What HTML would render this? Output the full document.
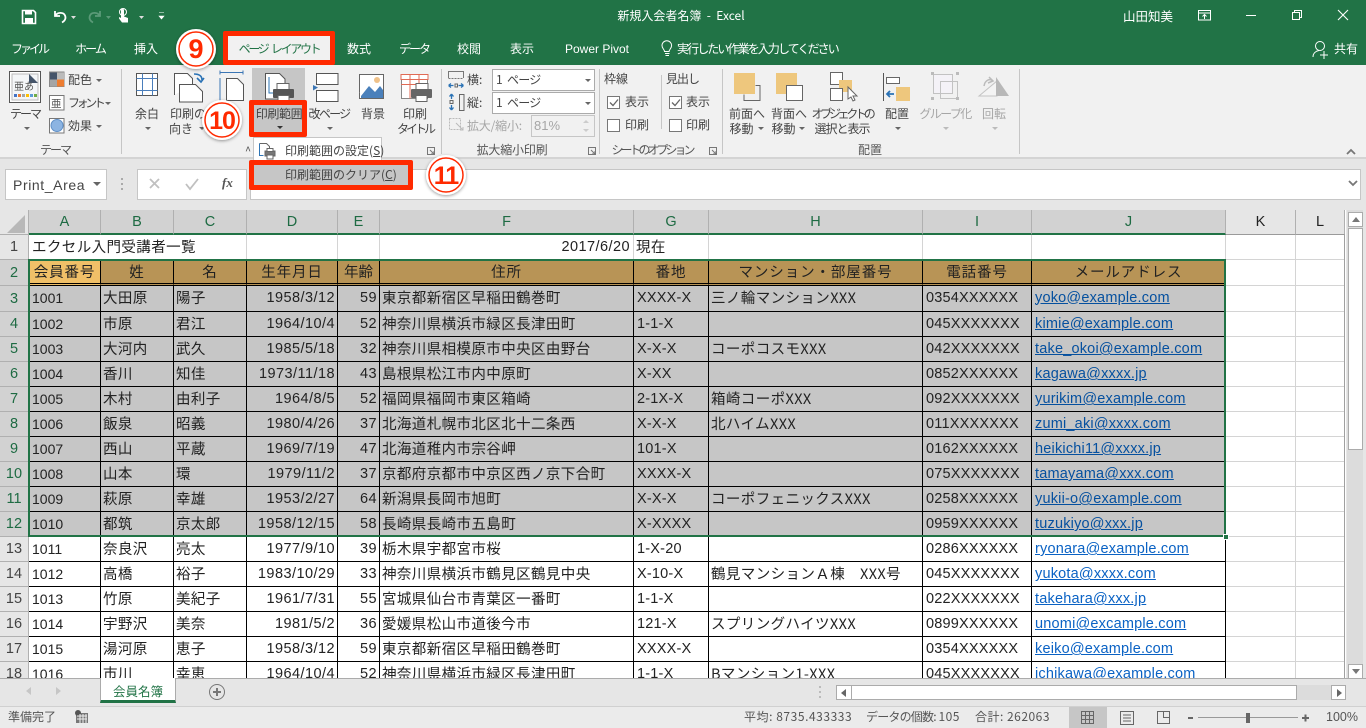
<!DOCTYPE html>
<html lang="ja"><head><meta charset="utf-8"><title>新規入会者名簿 - Excel</title>
<style>
*{box-sizing:border-box}
html,body{margin:0;padding:0;width:1366px;height:728px;overflow:hidden;background:#e6e6e6;font-family:"Liberation Sans","Noto Sans CJK JP",sans-serif;color:#333}
.a{position:absolute;white-space:nowrap}
.t{position:absolute;white-space:nowrap;font-size:12px;line-height:16px;color:#444;font-family:"Noto Sans CJK JP","Liberation Sans",sans-serif;transform:translateX(-50%);text-align:center}
.t2{line-height:15px}
.w{color:#fff}
.g{color:#a6a6a6}
.l{transform:none}
svg{position:absolute;overflow:visible}
.sep{position:absolute;top:69px;height:85px;width:1px;background:#c6c6c6}
.dd{position:absolute;width:0;height:0;border:3px solid transparent;border-top:3px solid #666;border-bottom:0}
.box{position:absolute;background:#fff;border:1px solid #ababab}
.cb{position:absolute;width:13px;height:13px;background:#fff;border:1px solid #777}
.red{position:absolute;border:5px solid #ff2a00;border-radius:2px}
#grid{position:absolute;left:0;top:210px;width:1346px;height:468px;overflow:hidden;background:#fff}
table{border-collapse:separate;border-spacing:0;table-layout:fixed;width:1345px;font-size:14.5px;color:#222;font-family:"Liberation Sans","Noto Sans CJK JP",sans-serif}
td,th{padding:0 3px;height:25px;overflow:hidden;white-space:nowrap;font-weight:400;border-right:1px solid #000;border-bottom:1px solid #000;line-height:22px}
td{letter-spacing:.2px}
td:nth-child(2){letter-spacing:0;font-size:14px}
th{background:#e6e6e6;color:#444;border-right:1px solid #b0b0b0;border-bottom:1px solid #b0b0b0;text-align:center;padding:0;font-size:14.5px}
tr.h th{height:25px;color:#1e6b43;background:#d2d2d2;border-bottom:2px solid #217346;font-size:14.5px}
tr.h th.n{background:#e6e6e6;color:#222;border-bottom:1px solid #9a9a9a;border-right:1px solid #b0b0b0}
tr.h th.z{background:#e6e6e6;border-bottom:1px solid #b0b0b0;border-right:1px solid #b0b0b0}
th.s{background:#d2d2d2;color:#1e6b43}
td.e{border-right:1px solid #d4d4d4;border-bottom:1px solid #d4d4d4;background:#fff}
tr.r1 td{border-right:1px solid #d4d4d4;border-bottom:1px solid #d4d4d4;background:#fff}
tr.r2 td{background:#b89456;text-align:center;height:26px;border-bottom:3px double #000;font-size:14.5px;letter-spacing:.9px;color:#222;font-family:"Noto Sans CJK JP",sans-serif}
tr.r2 td.e{background:#fff;border-bottom:1px solid #d4d4d4;border-right:1px solid #d4d4d4}
tr.sel td{background:#c6c6c6}
tr.sel td.e{background:#fff}
tr.f td{padding-bottom:2px}
td.rt{text-align:right;padding-right:2px;letter-spacing:.45px}
td.j,td.j:nth-child(2){font-size:14.5px;letter-spacing:.4px;font-family:"Noto Sans CJK JP","Liberation Sans",sans-serif;padding-left:2px}
a{color:#0a62c4;text-decoration:underline}
tr.sel a{color:#05509f}
</style></head><body>

<!-- title bar + tabs -->
<div class="a" style="left:0;top:0;width:1366px;height:65px;background:#217346"></div>
<svg style="left:0;top:0" width="180" height="32" viewBox="0 0 180 32" fill="none">
<path d="M22.500 10.500h11l2 2v11h-13z" stroke="#fff" stroke-width="1.600"/><rect x="25" y="10" width="7" height="4.500" fill="#fff"/><rect x="25" y="18" width="8" height="5.500" fill="#fff"/>
<path d="M55 11v5h5M55.500 15.500c2-3.500 8-3.500 9.500 0s-1 6-3 7" stroke="#fff" stroke-width="1.800"/><path d="M71 16h5l-2.500 3z" fill="#ddd"/>
<path d="M100 11v5h-5M99.500 15.500c-2-3.500-8-3.500-9.500 0s1 6 3 7" stroke="#5b9a78" stroke-width="1.800"/><path d="M106 16h5l-2.500 3z" fill="#5b9a78"/>
<path d="M121 9.500a2.500 2.500 0 0 1 3 0v7l4 1.500v4.500h-6l-3-4v-1.500l2 1z" fill="#fff"/><circle cx="123" cy="12" r="3.500" stroke="#fff"/>
<path d="M139 16h5l-2.500 3z" fill="#ddd"/><path d="M159 12.500h5M159 16h5l-2.500 3z" fill="#fff" stroke="#fff" stroke-width=".6"/>
</svg>
<div class="t w" style="left:681px;top:8px;font-size:12px">新規入会者名簿&nbsp; -&nbsp; Excel</div>
<div class="t w" style="left:1148px;top:8px;font-size:12.500px">山田知美</div>
<svg style="left:1190px;top:0" width="176" height="32" fill="none" stroke="#fff"><rect x="8.500" y="10.500" width="12" height="9.500"/><path d="M8 13h13M14.500 19v-4M12.500 16.500l2-2 2 2"/><path d="M56 15.500h10"/><rect x="102.500" y="12.500" width="7" height="7"/><path d="M104.500 12.500v-2h7v7h-2"/><path d="M148 10l10 10M158 10l-10 10" stroke-width="1.100"/></svg>

<div class="t w" style="left:29px;top:41px;letter-spacing:-3px">ファイル</div>
<div class="t w" style="left:90px;top:41px;letter-spacing:-2px">ホーム</div>
<div class="t w" style="left:146px;top:41px">挿入</div>
<div class="t w" style="left:359px;top:41px">数式</div>
<div class="t w" style="left:414px;top:41px;letter-spacing:-2px">データ</div>
<div class="t w" style="left:469px;top:41px">校閲</div>
<div class="t w" style="left:522px;top:41px">表示</div>
<div class="t w" style="left:597px;top:41px;font-family:'Liberation Sans',sans-serif">Power Pivot</div>
<svg style="left:660px;top:40px" width="14" height="18" fill="none" stroke="#fff"><path d="M4.500 11.500c0-2-2.500-3-2.500-6a4.800 4.800 0 0 1 9.600 0c0 3-2.500 4-2.500 6zM5 13.500h4.500M5.500 15.500h3.500"/></svg>
<div class="t w l" style="left:677px;top:41px;letter-spacing:-1.900px">実行したい作業を入力してください</div>
<svg style="left:1310px;top:40px" width="20" height="18" fill="none" stroke="#fff"><circle cx="10" cy="6" r="4.500"/><path d="M3 17c0-4 3-6 6-6.500M10 15h8M14 11v8"/></svg>
<div class="t w" style="left:1346px;top:41px">共有</div>

<!-- ribbon -->
<div class="a" style="left:0;top:65px;width:1366px;height:94px;background:#f1f1f1;border-bottom:2px solid #d4d4d4"></div>
<div class="sep" style="left:121px"></div><div class="sep" style="left:441px"></div><div class="sep" style="left:599px"></div><div class="sep" style="left:722px"></div><div class="sep" style="left:1019px"></div>
<div class="a" style="left:252px;top:68px;width:53px;height:69px;background:#c6c6c6"></div>

<!-- theme -->
<svg style="left:9px;top:71px" width="115" height="66" fill="none">
<rect x=".500" y=".500" width="31" height="31" fill="#fff" stroke="#555"/><rect x="3" y="3" width="26" height="26" fill="#f4f6f8" stroke="#bbb"/><path d="M20 3l9 9h-9z" fill="#44546a"/>
<rect x="5" y="23" width="3" height="3" fill="#4472c4"/><rect x="9" y="23" width="3" height="3" fill="#ed7d31"/><rect x="13" y="23" width="3" height="3" fill="#a5a5a5"/><rect x="17" y="23" width="3" height="3" fill="#ffc000"/><rect x="21" y="23" width="3" height="3" fill="#5b9bd5"/><rect x="25" y="23" width="3" height="3" fill="#70ad47"/>
<text x="5" y="19" font-size="10" fill="#555" font-family="Noto Sans CJK JP,sans-serif" stroke="none">亜あ</text>
<rect x="40.500" y="1" width="14.500" height="14.500" fill="#fff" stroke="#888"/><rect x="41" y="1.500" width="7" height="7" fill="#44546a"/><rect x="48" y="1.500" width="7" height="7" fill="#bbb"/><rect x="41" y="8.500" width="7" height="7" fill="#a5a5a5"/><rect x="48" y="8.500" width="7" height="7" fill="#ed7d31"/>
<rect x="40.500" y="24.500" width="14.500" height="14.500" fill="#fff" stroke="#777"/><text x="42" y="36" font-size="10.500" fill="#555" font-family="Noto Sans CJK JP,sans-serif" stroke="none">亜</text>
<rect x="40.500" y="47.500" width="14.500" height="14.500" fill="#fff" stroke="#777"/><circle cx="48" cy="54.500" r="6" fill="#8cb4e2" stroke="#5f8fc7"/>
</svg>
<div class="t l" style="left:68px;top:72px">配色</div><div class="dd" style="left:96px;top:79px"></div>
<div class="t l" style="left:68px;top:95px;letter-spacing:-3.400px">フォント</div><div class="dd" style="left:105px;top:102px"></div>
<div class="t l" style="left:68px;top:118px">効果</div><div class="dd" style="left:96px;top:125px"></div>
<div class="t" style="left:25px;top:106px;letter-spacing:-2px">テーマ</div><div class="dd" style="left:24px;top:127px"></div>
<div class="t" style="left:55px;top:142px;color:#555;letter-spacing:-2px">テーマ</div>

<!-- page setup icons -->
<svg style="left:130px;top:70px" width="310" height="65" fill="none">
<rect x="6.500" y="3.500" width="21" height="22" fill="#fff" stroke="#555"/><path d="M6.500 8.500h21M6.500 20.500h21M12.500 3.500v22M22.500 3.500v22" stroke="#4a7ebb"/>
<path d="M44.500 25V3.500h13l5 5v6" fill="#fff" stroke="#555"/><path d="M49.500 14.500h16l7 7v10.500h-23z" fill="#fff" stroke="#555"/><path d="M64 4c5 0 8 2 8 6M67 8l4 4 3-4" stroke="#2a72b5" stroke-width="1.600"/>
<path d="M90 2.500h23M90 .5v4M113 .5v4" stroke="#3b76b5"/><path d="M96.500 8.500h11l6 6v16h-17z" fill="#fff" stroke="#555"/><path d="M90 8v23" stroke="#3b76b5"/>
<path d="M135.500 3.500h14l5.500 5.500v20h-19.500z" fill="#fff" stroke="#555"/><path d="M139 7v16h4" stroke="#2e75b6"/><rect x="147" y="13.500" width="12" height="8" fill="#fff" stroke="#666"/><rect x="143" y="19" width="21" height="9" fill="#555" rx="1"/><rect x="148" y="25.500" width="11" height="6" fill="#fff" stroke="#666"/>
<path d="M186.500 3.500h21.500v11h-21.500zM186.500 20.500h21.500v11h-21.500z" fill="#fff" stroke="#555"/><path d="M183 15l5 2.500-5 3z" fill="#3b76b5"/>
<rect x="229.500" y="4.500" width="24" height="24" fill="#fff" stroke="#666"/><path d="M231 26l8-10 6 6 5-6 3 4v8h-22z" fill="#4a80bb"/><circle cx="247" cy="10" r="3" fill="#f0c28a"/><path d="M230 23l11-11" stroke="#fff"/>
<rect x="271.500" y="4.500" width="26" height="24" fill="#fff" stroke="#888"/><path d="M271 4.500h27v5h-27z" fill="#fff" stroke="#e06b55"/><path d="M271 14.500h27M280 4.500v24M289 4.500v24" stroke="#e06b55"/><rect x="286" y="13.500" width="12" height="8" fill="#fff" stroke="#666"/><rect x="281" y="19" width="21" height="9" fill="#666" rx="1"/><rect x="286" y="25.500" width="11" height="6" fill="#fff" stroke="#666"/>
</svg>
<div class="t" style="left:147px;top:106px">余白</div><div class="dd" style="left:145px;top:127px"></div>
<div class="t t2" style="left:188px;top:106px">印刷の<br><span style="display:inline-block;margin-right:14px">向き</span></div><div class="dd" style="left:199px;top:127px"></div>
<div class="t" style="left:279px;top:106px;letter-spacing:-.4px">印刷範囲</div><div class="dd" style="left:277px;top:126px;border-top-color:#333"></div>
<div class="t" style="left:329px;top:106px;letter-spacing:-1.700px">改ページ</div><div class="dd" style="left:327px;top:127px"></div>
<div class="t" style="left:373px;top:106px">背景</div>
<div class="t t2" style="left:415px;top:106px">印刷<br><span style="letter-spacing:-3px">タイトル</span></div>
<div class="t" style="left:248px;top:143px;color:#555;font-size:11px">^</div>
<svg style="left:427px;top:147px" width="10" height="10" fill="none" stroke="#777"><path d="M.5 .5h7v7h-7zM3 3l4 4M7 4v3H4"/></svg>

<!-- scale -->
<svg style="left:447px;top:70px" width="18" height="66" fill="none"><path d="M1.500 8V1.500h15V8" stroke="#777"/><path d="M1.500 8.500h15" stroke="#777" stroke-dasharray="2 1"/><path d="M1.500 15.500h5M1.500 15.500l2.500-2M1.500 15.500l2.500 2M16.500 15.500h-5M16.500 15.500l-2.500-2M16.500 15.500l-2.500 2" stroke="#2a72b5" stroke-width="1.300"/><rect x="8" y="14" width="2.500" height="3" stroke="#666"/><path d="M4.500 24v5M4.500 24l-2 2.500M4.500 24l2 2.500M4.500 40v-5M4.500 40l-2-2.500M4.500 40l2-2.500" stroke="#2a72b5" stroke-width="1.300"/><rect x="3" y="30.500" width="3" height="3" stroke="#666"/><rect x="12.500" y="24.500" width="4.500" height="16" stroke="#666"/><rect x="2.500" y="48.500" width="11" height="11" stroke="#bbb" stroke-dasharray="2 1"/><path d="M9 53l7 7M13 60h3v-3" stroke="#bbb"/></svg>
<div class="t l" style="left:467px;top:72px">横:</div><div class="t l" style="left:467px;top:95px">縦:</div><div class="t l g" style="left:467px;top:118px;letter-spacing:-.2px">拡大/縮小:</div>
<div class="box" style="left:492px;top:69px;width:103px;height:22px"></div><div class="box" style="left:492px;top:92px;width:103px;height:22px"></div><div class="box" style="left:531px;top:115px;width:64px;height:22px;background:#f1f1f1;border-color:#c6c6c6"></div>
<div class="t l" style="left:496px;top:72px;letter-spacing:-.7px;word-spacing:3px">1 ページ</div><div class="t l" style="left:496px;top:95px;letter-spacing:-.7px;word-spacing:3px">1 ページ</div><div class="t l g" style="left:534px;top:118px;font-family:'Liberation Sans',sans-serif;font-size:13px">81%</div>
<div class="dd" style="left:585px;top:79px"></div><div class="dd" style="left:585px;top:102px"></div>
<div class="a" style="left:583px;top:120px;border:3px solid transparent;border-bottom:3px solid #ccc;border-top:0"></div><div class="a" style="left:583px;top:129px;border:3px solid transparent;border-top:3px solid #ccc;border-bottom:0"></div>
<div class="t" style="left:512px;top:142px;color:#555;letter-spacing:-.2px">拡大縮小印刷</div>
<svg style="left:588px;top:147px" width="10" height="10" fill="none" stroke="#777"><path d="M.5 .5h7v7h-7zM3 3l4 4M7 4v3H4"/></svg>

<!-- sheet options -->
<div class="t l" style="left:604px;top:71px">枠線</div><div class="t l" style="left:666px;top:71px;letter-spacing:-1px">見出し</div>
<div class="a" style="left:661px;top:75px;width:1px;height:54px;background:#c6c6c6"></div>
<div class="cb" style="left:607px;top:96px"></div><div class="cb" style="left:669px;top:96px"></div><div class="cb" style="left:607px;top:119px"></div><div class="cb" style="left:669px;top:119px"></div>
<svg style="left:607px;top:96px" width="80" height="14" fill="none" stroke="#666" stroke-width="1.300"><path d="M3 6.500l3 3 5-6M65 6.500l3 3 5-6"/></svg>
<div class="t l" style="left:625px;top:94px">表示</div><div class="t l" style="left:686px;top:94px">表示</div><div class="t l" style="left:625px;top:117px">印刷</div><div class="t l" style="left:686px;top:117px">印刷</div>
<div class="t" style="left:652px;top:142px;color:#555;letter-spacing:-3px">シートのオプション</div>
<svg style="left:709px;top:147px" width="10" height="10" fill="none" stroke="#777"><path d="M.5 .5h7v7h-7zM3 3l4 4M7 4v3H4"/></svg>

<!-- arrange -->
<svg style="left:730px;top:70px" width="300" height="66" fill="none">
<rect x="4" y="3" width="21" height="21" fill="#eec77d"/><path d="M25.500 15.500h4.500v15h-16v-6" stroke="#666"/>
<rect x="46" y="3" width="21" height="21" fill="#eec77d"/><rect x="56.500" y="15.500" width="16" height="15" fill="#fff" stroke="#666"/>
<rect x="100.500" y="2.500" width="12" height="12" stroke="#666" fill="#fff"/><rect x="109" y="10" width="13" height="12" fill="#eec77d"/><rect x="100.500" y="18.500" width="12" height="12" stroke="#666" fill="#fff"/><path d="M118 17v12l3-2 2 4 2-1-2-4h4z" fill="#fff" stroke="#666"/>
<path d="M153.500 3v28" stroke="#555"/><rect x="156.500" y="7.500" width="13" height="6" stroke="#666" fill="#fff"/><rect x="166" y="17" width="14" height="14" fill="#eec77d"/><path d="M164 24h-7M160 21l-3 3 3 3" stroke="#2a72b5" stroke-width="1.800"/>
<rect x="203.500" y="4.500" width="19" height="19" stroke="#c2c2c2" fill="#f4f2f7"/><rect x="210.500" y="11.500" width="17" height="17" stroke="#c2c2c2"/><path d="M201 2h3v3h-3zM226 2h3v3h-3zM201 27h3v3h-3zM226 27h3v3h-3z" fill="#bbb"/>
<path d="M249 26l18-15v15z" stroke="#c4c4c4" fill="#f4f4f4"/><path d="M266 26V7l13 19z" fill="#b8b8b8"/><path d="M254 16c1-6 6-8 9-5M259 7l4 4-5 2" stroke="#bbb" stroke-width="1.500"/>
</svg>
<div class="t t2" style="left:747px;top:106px">前面へ<br><span style="display:inline-block;margin-right:11px">移動</span></div><div class="dd" style="left:758px;top:127px"></div>
<div class="t t2" style="left:789px;top:106px">背面へ<br><span style="display:inline-block;margin-right:11px">移動</span></div><div class="dd" style="left:799px;top:127px"></div>
<div class="t t2" style="left:842px;top:106px"><span style="letter-spacing:-3.300px">オブジェクトの</span><br><span style="letter-spacing:-1px">選択と表示</span></div>
<div class="t" style="left:897px;top:106px">配置</div><div class="dd" style="left:895px;top:127px"></div>
<div class="t g" style="left:945px;top:106px;letter-spacing:-1.600px">グループ化</div><div class="dd" style="left:943px;top:127px;border-top-color:#bbb"></div>
<div class="t g" style="left:994px;top:106px">回転</div><div class="dd" style="left:992px;top:127px;border-top-color:#bbb"></div>
<div class="t" style="left:870px;top:142px;color:#555">配置</div>
<svg style="left:1345px;top:147px" width="16" height="10" fill="none" stroke="#777" stroke-width="1.800"><path d="M2 7l4-4 4 4"/></svg>

<!-- formula -->
<div class="box" style="left:5px;top:169px;width:102px;height:31px;border-color:#c6c6c6"></div>
<div class="a" style="left:13px;top:177px;font-size:14px;color:#444;letter-spacing:.6px">Print_Area</div>
<div class="dd" style="left:93px;top:182px;border-width:4px;border-bottom:0"></div>
<div class="a" style="left:121px;top:178px;width:2px;height:2px;background:#aaa;box-shadow:0 5px #aaa,0 10px #aaa"></div>
<div class="box" style="left:137px;top:169px;width:110px;height:31px;border-color:#c6c6c6"></div>
<svg style="left:148px;top:176px" width="90" height="16" fill="none" stroke="#c0c0c0" stroke-width="1.800"><path d="M2 3l9 9M11 3l-9 9M38 8l4 5 8-10"/></svg>
<div class="a" style="left:222px;top:175px;font:italic bold 13px 'Liberation Serif',serif;color:#555">fx</div>
<div class="box" style="left:250px;top:169px;width:1111px;height:31px;border-color:#c6c6c6"></div>
<svg style="left:1348px;top:179px" width="12" height="10" fill="none" stroke="#777" stroke-width="1.800"><path d="M1 2l4 4 4-4"/></svg>

<!-- grid -->
<div id="grid">
<table>
<colgroup><col style="width:29px"><col style="width:72px"><col style="width:73px"><col style="width:73px"><col style="width:91px"><col style="width:42px"><col style="width:254px"><col style="width:75px"><col style="width:214px"><col style="width:109px"><col style="width:194px"><col style="width:70px"><col style="width:49px"></colgroup>
<tr class="h"><th class="z"></th><th>A</th><th>B</th><th>C</th><th>D</th><th>E</th><th>F</th><th>G</th><th>H</th><th>I</th><th>J</th><th class="n">K</th><th class="n">L</th></tr>
<tr class="r1"><th>1</th><td class="j" colspan="3" style="padding-left:3px">エクセル入門受講者一覧</td><td></td><td></td><td class="rt" style="padding-right:3px">2017/6/20</td><td class="j">現在</td><td></td><td></td><td></td><td></td><td></td></tr>
<tr class="r2"><th class="s" style="height:26px">2</th><td style="background:#f0c068">会員番号</td><td>姓</td><td>名</td><td>生年月日</td><td style="letter-spacing:0">年齢</td><td>住所</td><td>番地</td><td>マンション・部屋番号</td><td>電話番号</td><td>メールアドレス</td><td class="e"></td><td class="e"></td></tr>
<tr class="sel f"><th class="s" style="height:26px">3</th><td>1001</td><td class="j">大田原</td><td class="j">陽子</td><td class="rt">1958/3/12</td><td class="rt">59</td><td class="j">東京都新宿区早稲田鶴巻町</td><td>XXXX-X</td><td class="j">三ノ輪マンションXXX</td><td>0354XXXXXX</td><td><a>yoko@example.com</a></td><td class="e"></td><td class="e"></td></tr>
<tr class="sel"><th class="s">4</th><td>1002</td><td class="j">市原</td><td class="j">君江</td><td class="rt">1964/10/4</td><td class="rt">52</td><td class="j">神奈川県横浜市緑区長津田町</td><td>1-1-X</td><td></td><td>045XXXXXXX</td><td><a>kimie@example.com</a></td><td class="e"></td><td class="e"></td></tr>
<tr class="sel"><th class="s">5</th><td>1003</td><td class="j">大河内</td><td class="j">武久</td><td class="rt">1985/5/18</td><td class="rt">32</td><td class="j">神奈川県相模原市中央区由野台</td><td>X-X-X</td><td class="j">コーポコスモXXX</td><td>042XXXXXXX</td><td><a>take_okoi@example.com</a></td><td class="e"></td><td class="e"></td></tr>
<tr class="sel"><th class="s">6</th><td>1004</td><td class="j">香川</td><td class="j">知佳</td><td class="rt">1973/11/18</td><td class="rt">43</td><td class="j">島根県松江市内中原町</td><td>X-XX</td><td></td><td>0852XXXXXX</td><td><a>kagawa@xxxx.jp</a></td><td class="e"></td><td class="e"></td></tr>
<tr class="sel"><th class="s">7</th><td>1005</td><td class="j">木村</td><td class="j">由利子</td><td class="rt">1964/8/5</td><td class="rt">52</td><td class="j">福岡県福岡市東区箱崎</td><td>2-1X-X</td><td class="j">箱崎コーポXXX</td><td>092XXXXXXX</td><td><a>yurikim@example.com</a></td><td class="e"></td><td class="e"></td></tr>
<tr class="sel"><th class="s">8</th><td>1006</td><td class="j">飯泉</td><td class="j">昭義</td><td class="rt">1980/4/26</td><td class="rt">37</td><td class="j">北海道札幌市北区北十二条西</td><td>X-X-X</td><td class="j">北ハイムXXX</td><td>011XXXXXXX</td><td><a>zumi_aki@xxxx.com</a></td><td class="e"></td><td class="e"></td></tr>
<tr class="sel"><th class="s">9</th><td>1007</td><td class="j">西山</td><td class="j">平蔵</td><td class="rt">1969/7/19</td><td class="rt">47</td><td class="j">北海道稚内市宗谷岬</td><td>101-X</td><td></td><td>0162XXXXXX</td><td><a>heikichi11@xxxx.jp</a></td><td class="e"></td><td class="e"></td></tr>
<tr class="sel"><th class="s">10</th><td>1008</td><td class="j">山本</td><td class="j">環</td><td class="rt">1979/11/2</td><td class="rt">37</td><td class="j">京都府京都市中京区西ノ京下合町</td><td>XXXX-X</td><td></td><td>075XXXXXXX</td><td><a>tamayama@xxx.com</a></td><td class="e"></td><td class="e"></td></tr>
<tr class="sel"><th class="s">11</th><td>1009</td><td class="j">萩原</td><td class="j">幸雄</td><td class="rt">1953/2/27</td><td class="rt">64</td><td class="j">新潟県長岡市旭町</td><td>X-X-X</td><td class="j">コーポフェニックスXXX</td><td>0258XXXXXX</td><td><a>yukii-o@example.com</a></td><td class="e"></td><td class="e"></td></tr>
<tr class="sel"><th class="s">12</th><td>1010</td><td class="j">都筑</td><td class="j">京太郎</td><td class="rt">1958/12/15</td><td class="rt">58</td><td class="j">長崎県長崎市五島町</td><td>X-XXXX</td><td></td><td>0959XXXXXX</td><td><a>tuzukiyo@xxx.jp</a></td><td class="e"></td><td class="e"></td></tr>
<tr><th>13</th><td>1011</td><td class="j">奈良沢</td><td class="j">亮太</td><td class="rt">1977/9/10</td><td class="rt">39</td><td class="j">栃木県宇都宮市桜</td><td>1-X-20</td><td></td><td>0286XXXXXX</td><td><a>ryonara@example.com</a></td><td class="e"></td><td class="e"></td></tr>
<tr><th>14</th><td>1012</td><td class="j">高橋</td><td class="j">裕子</td><td class="rt">1983/10/29</td><td class="rt">33</td><td class="j">神奈川県横浜市鶴見区鶴見中央</td><td>X-10-X</td><td class="j">鶴見マンションＡ棟　XXX号</td><td>045XXXXXXX</td><td><a>yukota@xxxx.com</a></td><td class="e"></td><td class="e"></td></tr>
<tr><th>15</th><td>1013</td><td class="j">竹原</td><td class="j">美紀子</td><td class="rt">1961/7/31</td><td class="rt">55</td><td class="j">宮城県仙台市青葉区一番町</td><td>1-1-X</td><td></td><td>022XXXXXXX</td><td><a>takehara@xxx.jp</a></td><td class="e"></td><td class="e"></td></tr>
<tr><th>16</th><td>1014</td><td class="j">宇野沢</td><td class="j">美奈</td><td class="rt">1981/5/2</td><td class="rt">36</td><td class="j">愛媛県松山市道後今市</td><td>121-X</td><td class="j">スプリングハイツXXX</td><td>0899XXXXXX</td><td><a>unomi@excample.com</a></td><td class="e"></td><td class="e"></td></tr>
<tr><th>17</th><td>1015</td><td class="j">湯河原</td><td class="j">恵子</td><td class="rt">1958/3/12</td><td class="rt">59</td><td class="j">東京都新宿区早稲田鶴巻町</td><td>XXXX-X</td><td></td><td>0354XXXXXX</td><td><a>keiko@example.com</a></td><td class="e"></td><td class="e"></td></tr>
<tr><th>18</th><td>1016</td><td class="j">市川</td><td class="j">幸恵</td><td class="rt">1964/10/4</td><td class="rt">52</td><td class="j">神奈川県横浜市緑区長津田町</td><td>1-1-X</td><td class="j">Bマンション1-XXX</td><td>045XXXXXXX</td><td><a>ichikawa@example.com</a></td><td class="e"></td><td class="e"></td></tr>
</table>
<svg style="left:0;top:0" width="28" height="25"><path d="M25 5v18H7z" fill="#b8b8b8"/></svg>
<div class="a" style="left:1344px;top:24px;width:1px;height:444px;background:#a0a0a0"></div>
<div class="a" style="left:28px;top:49px;width:1198px;height:278px;border:2px solid #217346"></div>
<div class="a" style="left:1223px;top:324px;width:6px;height:6px;background:#217346;border:1px solid #fff"></div>
</div>

<!-- scrollbars -->
<div class="a" style="left:1347px;top:210px;width:16px;height:468px;background:#dcdcdc"></div>
<div class="a" style="left:1348px;top:212px;width:15px;height:15px;background:#fff;border:1px solid #ababab"></div><div class="a" style="left:1352px;top:217px;border:4px solid transparent;border-bottom:5px solid #777;border-top:0"></div>
<div class="a" style="left:1348px;top:228px;width:15px;height:222px;background:#fff;border:1px solid #ababab"></div>
<div class="a" style="left:1348px;top:664px;width:15px;height:15px;background:#fff;border:1px solid #ababab"></div><div class="a" style="left:1352px;top:669px;border:4px solid transparent;border-top:5px solid #777;border-bottom:0"></div>

<!-- tabs -->
<div class="a" style="left:0;top:678px;width:1366px;height:28px;background:#e6e6e6;border-top:1px solid #ababab"></div>
<div class="a" style="left:26px;top:687px;border:4px solid transparent;border-right:5px solid #c6c6c6;border-left:0"></div>
<div class="a" style="left:56px;top:687px;border:4px solid transparent;border-left:5px solid #c6c6c6;border-right:0"></div>
<div class="a" style="left:100px;top:678px;width:76px;height:25px;background:#fff;border:1px solid #ababab;border-top:0;border-bottom:3px solid #217346"></div>
<div class="t" style="left:138px;top:683px;color:#217346;font-size:12.500px">会員名簿</div>
<svg style="left:208px;top:683px" width="20" height="20" fill="none" stroke="#777"><circle cx="9" cy="9" r="7.500"/><path d="M5 9h8M9 5v8" stroke-width="2"/></svg>
<div class="a" style="left:819px;top:686px;width:2px;height:2px;background:#bbb;box-shadow:0 5px #bbb,0 10px #bbb"></div>
<div class="a" style="left:836px;top:685px;width:510px;height:15px;background:#dcdcdc"></div>
<div class="a" style="left:836px;top:685px;width:16px;height:15px;background:#fff;border:1px solid #ababab"></div><div class="a" style="left:841px;top:689px;border:4px solid transparent;border-right:5px solid #666;border-left:0"></div>
<div class="a" style="left:851px;top:685px;width:446px;height:15px;background:#fff;border:1px solid #ababab"></div>
<div class="a" style="left:1331px;top:685px;width:15px;height:15px;background:#fff;border:1px solid #ababab"></div><div class="a" style="left:1337px;top:689px;border:4px solid transparent;border-left:5px solid #666;border-right:0"></div>

<!-- status -->
<div class="a" style="left:0;top:706px;width:1366px;height:22px;background:#ebebeb;border-top:1px solid #d0d0d0"></div>
<div class="t l" style="left:8px;top:709px;color:#555;font-size:12px">準備完了</div>
<svg style="left:75px;top:710px" width="14" height="14"><rect x="1" y="3" width="12" height="10" fill="#777"/><circle cx="3" cy="3" r="3" fill="#555"/><path d="M2 6h10M2 9h10M5 4v9M8 4v9M11 4v9" stroke="#efefef"/></svg>
<div class="t l" style="left:744px;top:709px;color:#555;letter-spacing:.55px">平均: 8735.433333</div>
<div class="t l" style="left:866px;top:709px;color:#555"><span style="letter-spacing:-.8px">データの個数:</span> <span style="letter-spacing:.5px">105</span></div>
<div class="t l" style="left:975px;top:709px;color:#555;letter-spacing:.5px">合計: 262063</div>
<div class="a" style="left:1069px;top:707px;width:38px;height:21px;background:#c6c6c6"></div>
<svg style="left:1080px;top:709px" width="240" height="18" fill="none" stroke="#666"><path d="M1.500 2.500h12v12h-12zM1.500 6.500h12M1.500 10.500h12M5.500 2.500v12M9.500 2.500v12"/><path d="M40.500 2.500h13v13h-13zM43 6h8M43 9h8M43 12h8"/><path d="M77.500 2.500h12v12h-12zM83.500 2.500v6h6" /><path d="M108 9h5" stroke-width="2"/><path d="M118 8.500h100" stroke="#999"/><rect x="166" y="4" width="4" height="10" fill="#666" stroke="none"/><path d="M222 9h7M225.500 5.500v7" stroke-width="2"/></svg>
<div class="t l" style="left:1326px;top:709px;color:#555;font-family:'Liberation Sans',sans-serif;font-size:12.500px">100%</div>

<!-- dropdown -->
<div class="a" style="left:253px;top:137px;width:129px;height:53px;background:#fff;border:1px solid #c6c6c6"></div>
<svg style="left:258px;top:142px" width="20" height="20" fill="none" stroke="#666"><path d="M1.500 1.500h7l3 3v3"/><path d="M1.500 1.500v12h4" stroke="#2e75b6"/><rect x="7" y="9" width="10" height="5" fill="#777"/><rect x="9" y="6.500" width="6" height="3" fill="#fff"/><rect x="9" y="13" width="6" height="4" fill="#fff"/></svg>
<div class="t l" style="left:285px;top:143px;font-size:12px"><span>印刷範囲の設定(<u>S</u>)</span></div>
<div class="a" style="left:251px;top:162px;width:158px;height:26px;background:#c6c6c6"></div>
<div class="t l" style="left:285px;top:167px;font-size:12px">印刷範囲のクリア(<u>C</u>)</div>

<!-- annotations -->
<div class="red" style="left:223px;top:31px;width:112px;height:34px;background:#f1f1f1"></div>
<div class="t" style="left:279px;top:41px;color:#217346;letter-spacing:-2.300px;word-spacing:3px">ページ レイアウト</div>
<div class="red" style="left:249px;top:100px;width:58px;height:37px"></div>
<div class="red" style="left:249px;top:160px;width:164px;height:30px"></div>
<svg style="left:0;top:0" width="1366" height="210">
<defs><filter id="sh" x="-30%" y="-30%" width="160%" height="160%"><feDropShadow dx="0" dy="1" stdDeviation="1.500" flood-color="#000" flood-opacity=".4"/></filter></defs>
<g font-family="Liberation Sans,sans-serif" font-weight="700" fill="#ff2a00" text-anchor="middle">
<circle cx="196" cy="49" r="20" fill="#fff" filter="url(#sh)"/><circle cx="196" cy="49" r="17" fill="none" stroke="#ff2a00" stroke-width="1.500"/><text x="196" y="58" font-size="27">9</text>
<circle cx="222" cy="120" r="20" fill="#fff" filter="url(#sh)"/><circle cx="222" cy="120" r="17" fill="none" stroke="#ff2a00" stroke-width="1.500"/><text x="222" y="129" font-size="25" letter-spacing="-1">10</text>
<circle cx="446" cy="175" r="20" fill="#fff" filter="url(#sh)"/><circle cx="446" cy="175" r="17" fill="none" stroke="#ff2a00" stroke-width="1.500"/><text x="446" y="184" font-size="25" letter-spacing="-1">11</text>
</g></svg>
</body></html>
